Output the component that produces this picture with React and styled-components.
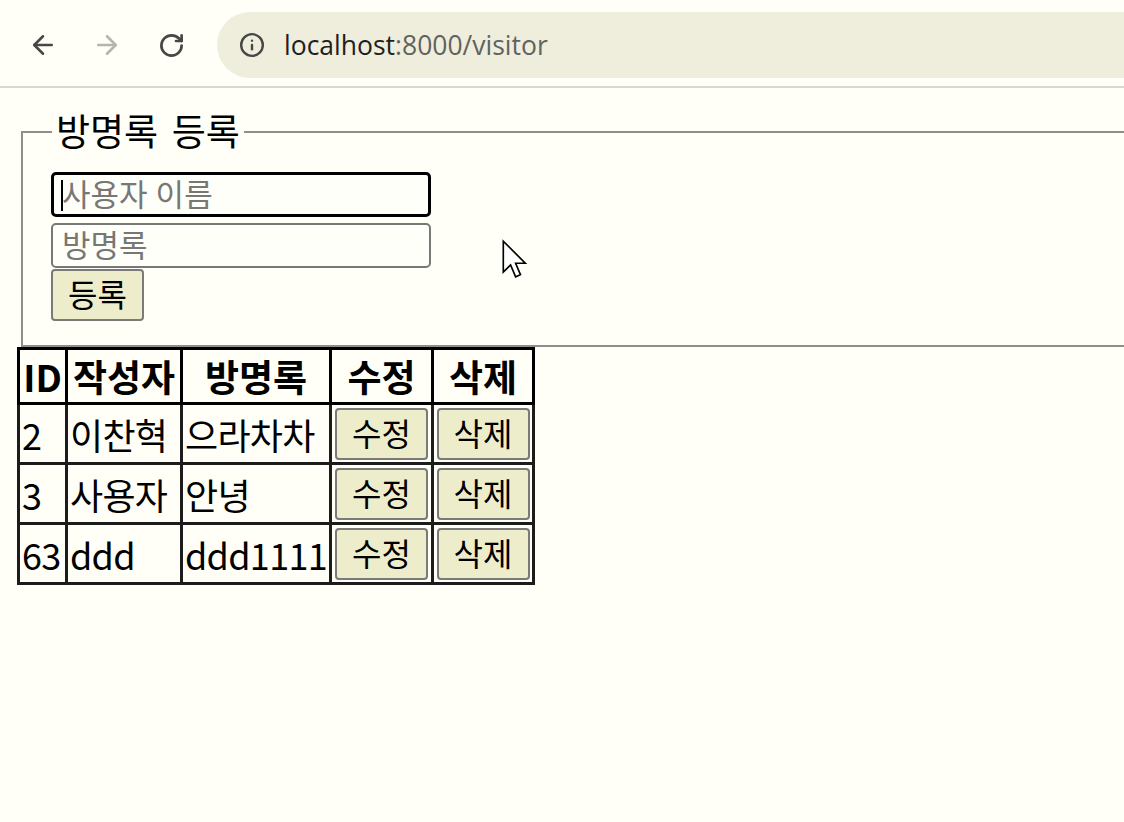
import React from "react";
import styled, { createGlobalStyle } from "styled-components";
import { ArrowLeft, ArrowRight, RotateCw, Info } from "lucide-react";

const GlobalStyle = createGlobalStyle`
  html, body {
    margin: 0;
    background: #fffff7;
  }
  body {
    font-family: "Open Sans", "Noto Sans CJK KR", sans-serif;
    color: #000;
  }
`;

const rows = [
  { id: 2, writer: "이찬혁", text: "으라차차" },
  { id: 3, writer: "사용자", text: "안녕" },
  { id: 63, writer: "ddd", text: "ddd1111" },
];

export default function App() {
  return (
    <>
      <GlobalStyle />
      <Toolbar>
        <NavButton>
          <ArrowLeft size={30} strokeWidth={2} color="#474747" />
        </NavButton>
        <NavButton>
          <ArrowRight size={30} strokeWidth={2} color="#b5b5b0" />
        </NavButton>
        <NavButton>
          <RotateCw size={27} strokeWidth={2.4} color="#474747" />
        </NavButton>
        <AddressBar>
          <Info size={26} strokeWidth={2.2} color="#474747" />
          <Url>
            localhost<Muted>:8000/visitor</Muted>
          </Url>
        </AddressBar>
      </Toolbar>

      <Page>
        <Fieldset>
          <Legend>방명록 등록</Legend>
          <Form>
            <Field $focused>
              <Caret />
              <Placeholder>사용자 이름</Placeholder>
            </Field>
            <Field>
              <Placeholder>방명록</Placeholder>
            </Field>
            <Button>등록</Button>
          </Form>
        </Fieldset>

        <Table>
          <colgroup>
            <col style={{ width: 48 }} />
            <col style={{ width: 115 }} />
            <col style={{ width: 149 }} />
            <col style={{ width: 102 }} />
            <col style={{ width: 101 }} />
          </colgroup>
          <thead>
            <tr>
              <Th>ID</Th>
              <Th>작성자</Th>
              <Th>방명록</Th>
              <Th>수정</Th>
              <Th>삭제</Th>
            </tr>
          </thead>
          <tbody>
            {rows.map((r) => (
              <tr key={r.id}>
                <Td>{r.id}</Td>
                <Td>{r.writer}</Td>
                <Td>{r.text}</Td>
                <Td $center>
                  <Button>수정</Button>
                </Td>
                <Td $center>
                  <Button>삭제</Button>
                </Td>
              </tr>
            ))}
          </tbody>
        </Table>

        <Pointer width="31" height="44" viewBox="0 0 14 20">
          <path
            d="M1 1 L1 15 L4.3 11.8 L6.6 17.2 L8.8 16.2 L6.6 11 L11 11 Z"
            fill="#fff"
            stroke="#000"
            strokeWidth="0.75"
            strokeLinejoin="miter"
          />
        </Pointer>
      </Page>
    </>
  );
}

const Toolbar = styled.header`
  display: flex;
  align-items: center;
  box-sizing: border-box;
  height: 88px;
  padding: 4px 0 0 26px;
  border-bottom: 2px solid #d6d6d2;
  background: #fffff8;
  overflow: hidden;
`;

const NavButton = styled.div`
  display: flex;
  align-items: center;
  justify-content: center;
  width: 34px;
  height: 34px;
  margin-right: 30px;
`;

const AddressBar = styled.div`
  display: flex;
  align-items: center;
  gap: 19px;
  flex: 1;
  height: 66px;
  margin-left: -1px;
  margin-right: -60px;
  padding-left: 22px;
  border-radius: 33px;
  background: #efeedd;
`;

const Url = styled.span`
  font-family: "Open Sans", "Noto Sans", sans-serif;
  font-size: 26.5px;
  color: #1f1f1f;
`;

const Muted = styled.span`
  color: #5f6360;
`;

const Page = styled.main`
  position: relative;
  padding: 22px 0 0 17px;
  overflow: hidden;
  min-height: 700px;
`;

const Fieldset = styled.fieldset`
  margin: 0 0 0 4px;
  width: calc(100% + 40px);
  padding: 18px 28px 24px 28px;
  border: 2px solid #8e8e8a;
`;

const Legend = styled.legend`
  padding: 0 4px;
  margin-left: 1px;
  font-size: 37px;
  line-height: 44px;
  word-spacing: 4px;
`;

const Form = styled.div`
  display: flex;
  flex-direction: column;
  align-items: flex-start;
`;

const Field = styled.div`
  position: relative;
  display: flex;
  align-items: center;
  box-sizing: border-box;
  width: 380px;
  height: 45px;
  margin-bottom: ${(p) => (p.$focused ? "6px" : "1px")};
  padding-left: ${(p) => (p.$focused ? "8px" : "9px")};
  border: ${(p) => (p.$focused ? "3px solid #000" : "2px solid #787878")};
  border-radius: 5px;
  background: #fffff9;
`;

const Caret = styled.span`
  position: absolute;
  left: 7px;
  top: 5px;
  width: 2px;
  height: 31px;
  background: #000;
`;

const Placeholder = styled.span`
  font-size: 31px;
  line-height: 1;
  color: #777775;
`;

const Button = styled.button`
  box-sizing: border-box;
  width: 93px;
  height: 52px;
  padding: 0;
  border: 2px solid #7a7a78;
  border-radius: 4px;
  background: #ededcb;
  font-family: "Open Sans", "Noto Sans CJK KR", sans-serif;
  font-size: 32px;
  line-height: 1;
  color: #000;
`;

const Table = styled.table`
  table-layout: fixed;
  width: 515px;
  margin-top: 0;
  border-collapse: collapse;
  border: 3px solid #000;
  font-family: "Noto Sans CJK KR", "Open Sans", sans-serif;
`;

const Th = styled.th`
  height: 52px;
  padding: 0;
  border: 3px solid #000;
  font-size: 37px;
  font-weight: 700;
  line-height: 1;
  text-align: center;
  white-space: nowrap;
  overflow: hidden;
`;

const Td = styled.td`
  height: 57px;
  padding: 0 ${(p) => (p.$center ? "0" : "2px")};
  border: 3px solid #1c1c1c;
  font-size: 36px;
  letter-spacing: ${(p) => (p.$center ? "0" : "-0.7px")};
  line-height: 1;
  text-align: ${(p) => (p.$center ? "center" : "left")};
  white-space: nowrap;
  vertical-align: middle;
  overflow: hidden;
`;

const Pointer = styled.svg`
  position: absolute;
  left: 501px;
  top: 151px;
`;
